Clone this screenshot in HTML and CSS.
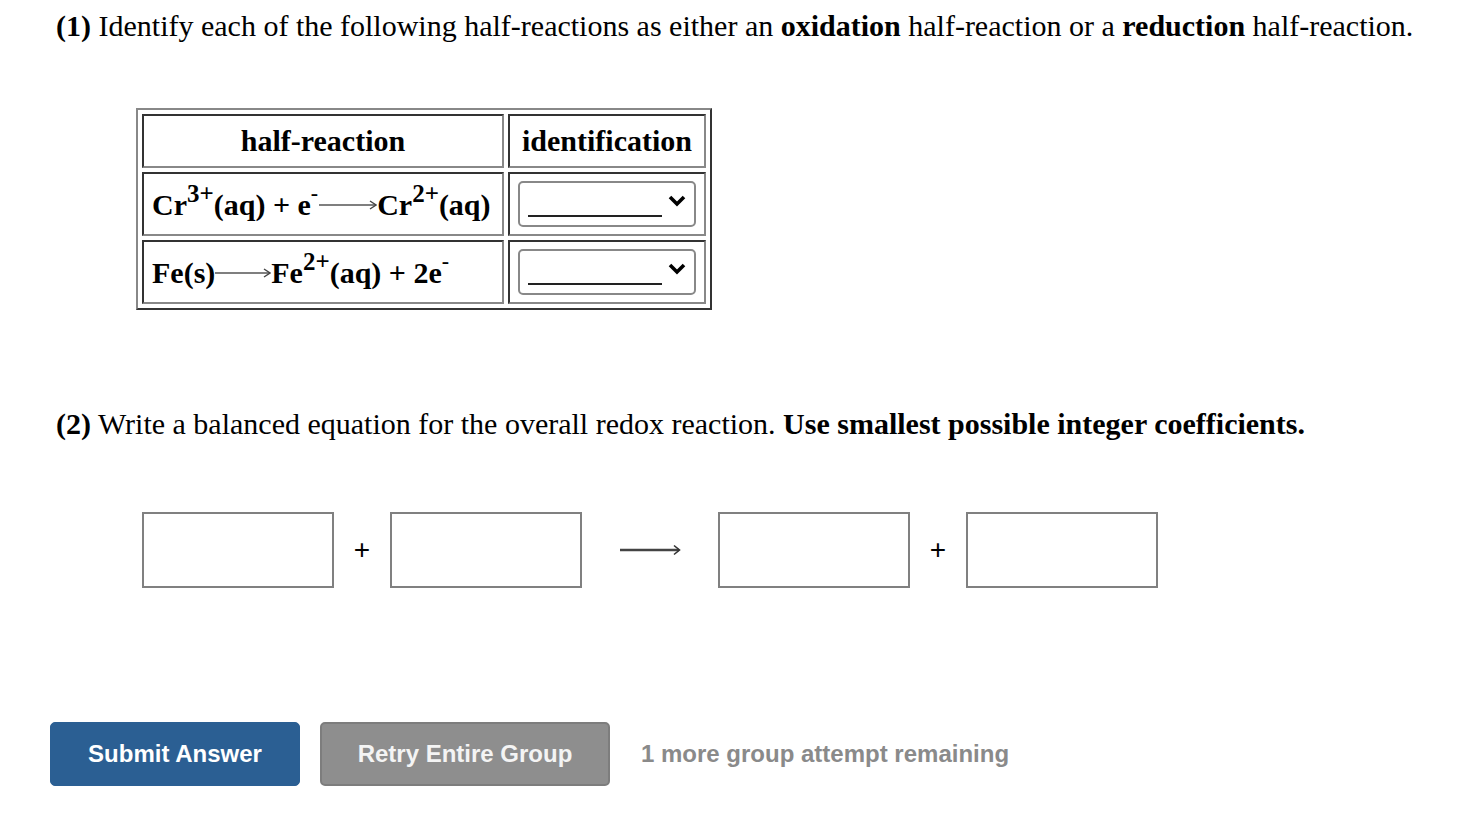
FILE: index.html
```html
<!DOCTYPE html>
<html>
<head>
<meta charset="utf-8">
<link rel="stylesheet" href="styles.css">
</head>
<body>
<div class="page">
  <p class="q q1"><b>(1)</b> Identify each of the following half-reactions as either an <b>oxidation</b> half-reaction or a <b>reduction</b> half-reaction.</p>

  <table class="hr">
    <tr>
      <th class="c1">half-reaction</th>
      <th class="c2">identification</th>
    </tr>
    <tr>
      <td class="c1">Cr<sup>3+</sup>(aq) + e<sup class="m">-</sup><svg class="arr" width="58" height="12" viewBox="0 0 58 12"><line x1="0" y1="6" x2="56" y2="6" stroke="#555" stroke-width="1.4"/><path d="M51 2 L57 6 L51 10" fill="none" stroke="#444" stroke-width="1.4"/></svg>Cr<sup>2+</sup>(aq)</td>
      <td class="c2"><div class="sel"><span class="blank"></span><svg class="chev" width="18" height="12" viewBox="0 0 18 12"><path d="M2 2 L9 9 L16 2" fill="none" stroke="#000" stroke-width="3.6"/></svg></div></td>
    </tr>
    <tr>
      <td class="c1">Fe(s)<svg class="arr" width="56" height="12" viewBox="0 0 56 12"><line x1="0" y1="6" x2="54" y2="6" stroke="#555" stroke-width="1.4"/><path d="M49 2 L55 6 L49 10" fill="none" stroke="#444" stroke-width="1.4"/></svg>Fe<sup>2+</sup>(aq) + 2e<sup class="m">-</sup></td>
      <td class="c2"><div class="sel"><span class="blank"></span><svg class="chev" width="18" height="12" viewBox="0 0 18 12"><path d="M2 2 L9 9 L16 2" fill="none" stroke="#000" stroke-width="3.6"/></svg></div></td>
    </tr>
  </table>

  <p class="q q2"><b>(2)</b> Write a balanced equation for the overall redox reaction. <b>Use smallest possible integer coefficients.</b></p>

  <div class="eq">
    <div class="box"></div>
    <span class="plus">+</span>
    <div class="box"></div>
    <svg class="bigarr" width="61" height="12" viewBox="0 0 61 12"><line x1="0" y1="6" x2="59" y2="6" stroke="#444" stroke-width="2.4"/><path d="M54 1.5 L59.5 6 L54 10.5" fill="none" stroke="#333" stroke-width="1.6"/></svg>
    <div class="box"></div>
    <span class="plus">+</span>
    <div class="box"></div>
  </div>

  <div class="actions">
    <button class="btn submit">Submit Answer</button>
    <button class="btn retry">Retry Entire Group</button>
    <span class="remain">1 more group attempt remaining</span>
  </div>
</div>
</body>
</html>
```

FILE: styles.css
```css
html, body {
  margin: 0;
  padding: 0;
  background: #fff;
}
.page {
  padding: 0 0 0 56px;
  font-family: "Liberation Serif", "Times New Roman", serif;
  color: #000;
}
.q {
  margin: 0;
  font-size: 30px;
  line-height: 34px;
}
.q1 {
  padding-top: 9px;
}
.hr {
  margin: 65px 0 0 80px;
  border-collapse: separate;
  border-spacing: 4px;
  border: 2px solid;
  border-color: #888 #333 #333 #888;
  font-size: 30px;
  font-weight: bold;
}
.hr th, .hr td {
  border: 2px solid;
  border-color: #333 #888 #888 #333;
  padding: 0 8px;
  white-space: nowrap;
}
.hr th {
  height: 50px;
  text-align: center;
}
.hr td {
  height: 58px;
  text-align: left;
  padding-top: 2px;
}
.hr td.c1 {
  width: 342px;
}
.hr td.c2 {
  width: 178px;
  padding-top: 1px;
  padding-bottom: 1px;
}
sup {
  font-size: 25px;
  line-height: 0;
  vertical-align: 13px;
}
sup.m {
  font-size: 22px;
  vertical-align: 15px;
  margin-right: 1px;
}
.arr {
  vertical-align: 4px;
}
.sel {
  height: 42px;
  border: 2px solid #888;
  border-radius: 5px;
  display: flex;
  align-items: center;
  justify-content: space-between;
  padding: 0 8px 0 8px;
  box-sizing: content-box;
}
.blank {
  width: 134px;
  height: 2px;
  background: #222;
  align-self: flex-end;
  margin-bottom: 8px;
}
.chev {
  margin-top: -6px;
}
.q2 {
  margin-top: 97px;
}
.eq {
  display: flex;
  align-items: center;
  margin: 71px 0 0 86px;
  font-family: "Liberation Sans", Arial, sans-serif;
}
.box {
  width: 188px;
  height: 72px;
  border: 2px solid #808080;
}
.plus {
  font-size: 28px;
  width: 56px;
  text-align: center;
}
.bigarr {
  margin: 0 37px 0 38px;
}
.actions {
  display: flex;
  align-items: center;
  margin: 134px 0 0 -6px;
  font-family: "Liberation Sans", Arial, sans-serif;
}
.btn {
  font-family: "Liberation Sans", Arial, sans-serif;
  font-weight: bold;
  font-size: 24px;
  color: #fff;
  height: 64px;
  border-radius: 5px;
  cursor: pointer;
}
.submit {
  width: 250px;
  background: #2b5f93;
  border: 1px solid #2b5f93;
  margin-right: 20px;
}
.retry {
  width: 290px;
  background: #8e8e8e;
  border: 2px solid #7d7d7d;
  color: #f4f4f4;
  margin-right: 31px;
}
.remain {
  font-size: 24px;
  font-weight: bold;
  color: #8a8a8a;
}
```
